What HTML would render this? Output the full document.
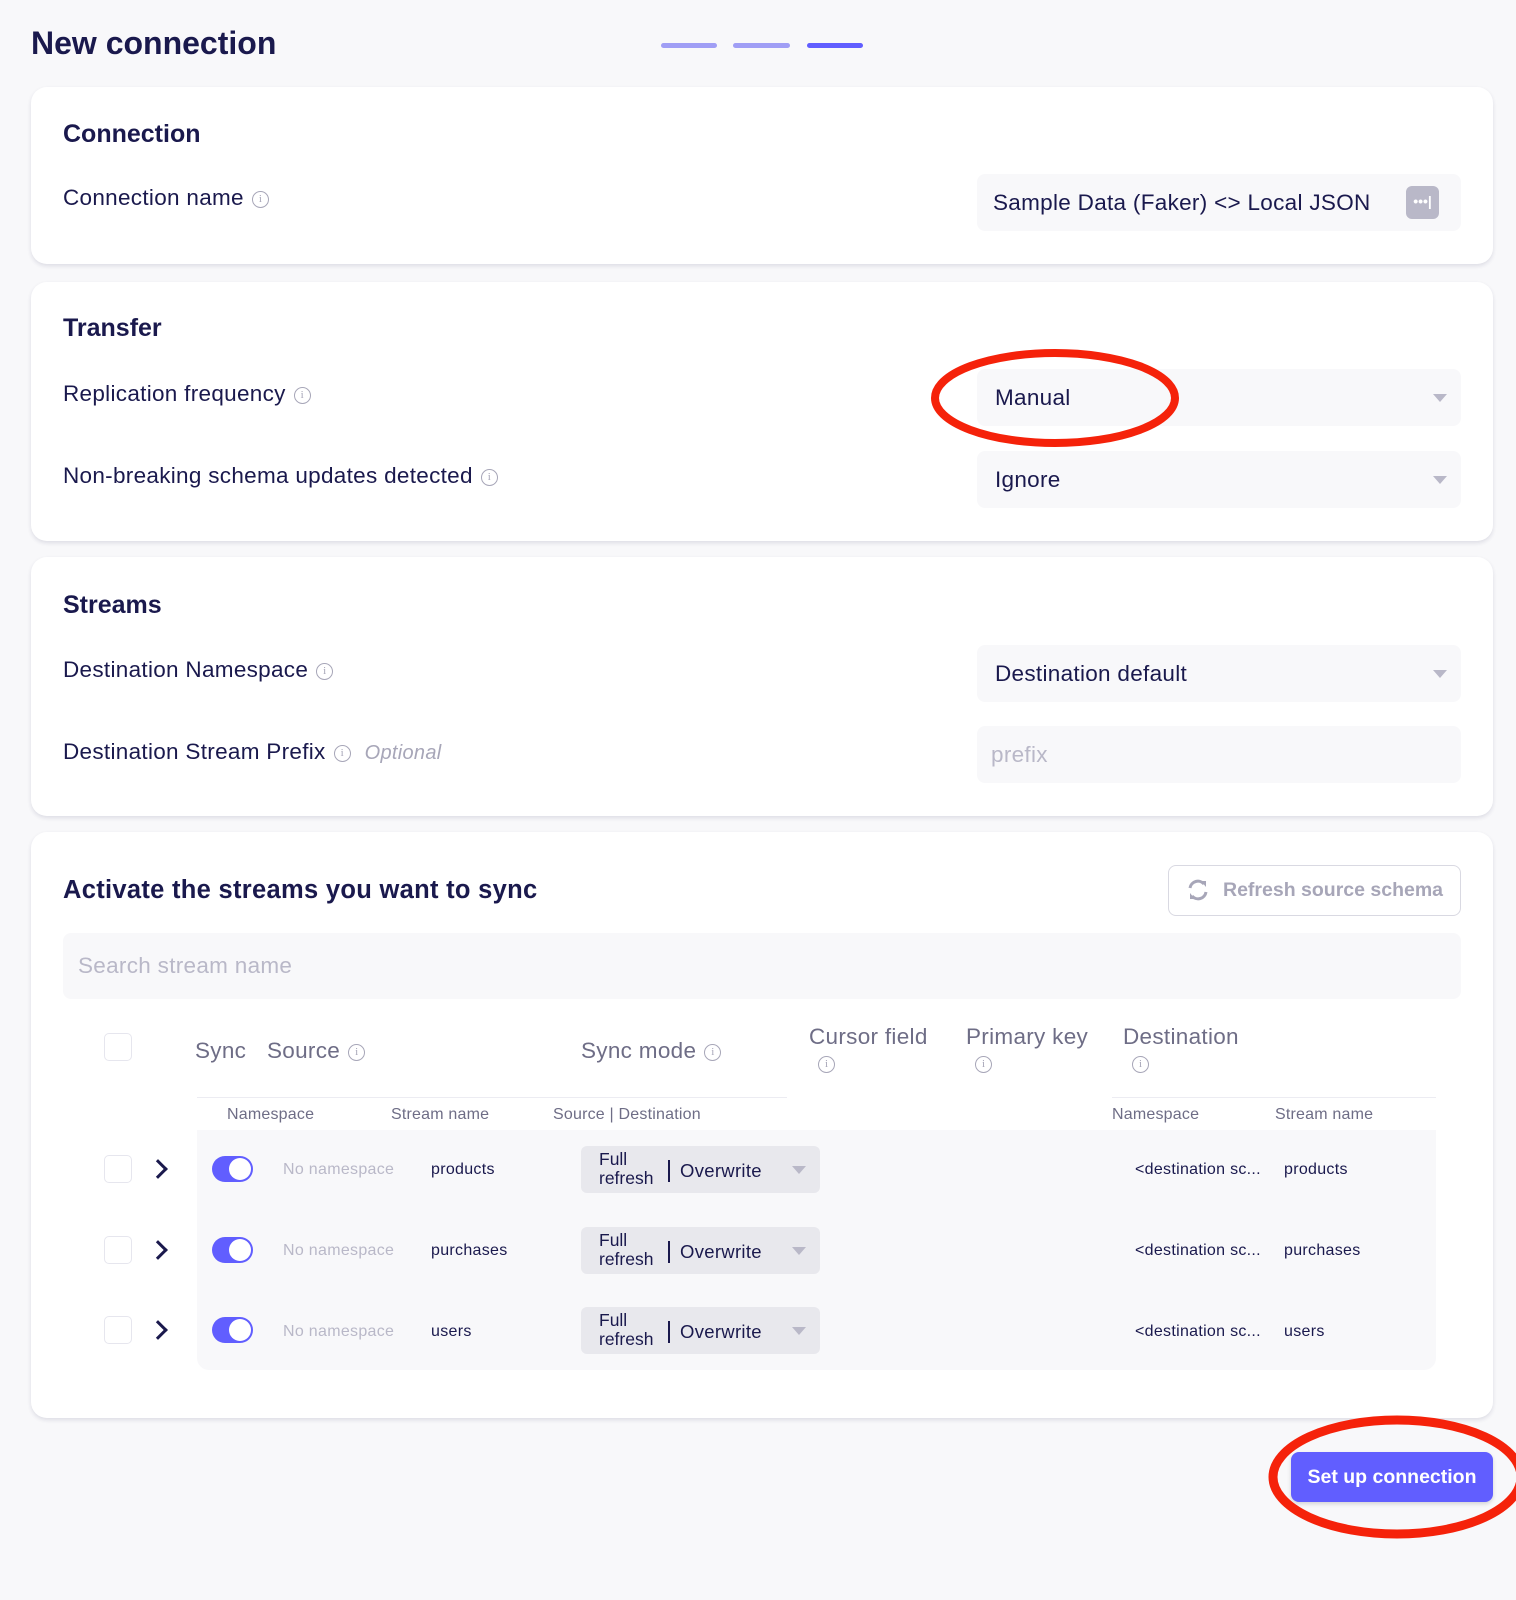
<!DOCTYPE html>
<html><head><meta charset="utf-8"><style>
*{box-sizing:border-box;margin:0;padding:0}
body{width:1516px;height:1600px;background:#f8f8fa;font-family:"Liberation Sans",Arial,sans-serif;color:#1a194d;position:relative;overflow:hidden}
.a{position:absolute}
.card{position:absolute;left:31px;width:1462px;background:#fff;border-radius:16px;box-shadow:0 2px 4px rgba(26,25,77,.12)}
h1{position:absolute;left:31px;top:25px;font-size:32px;font-weight:bold}
h2{position:absolute;left:32px;font-size:25px;font-weight:bold}
.lbl{position:absolute;left:32px;font-size:22.5px;white-space:nowrap;letter-spacing:.3px}
.inp{position:absolute;left:946px;width:484px;height:57px;background:#f8f8fa;border-radius:8px;font-size:22.5px;padding-left:18px;line-height:57px;letter-spacing:.3px}
.caret{position:absolute;right:14px;top:25px;width:0;height:0;border-left:7px solid transparent;border-right:7px solid transparent;border-top:8px solid #b9b8c8}
.i{display:inline-block;width:17px;height:17px;border:1.5px solid #a7a6b8;border-radius:50%;font-size:11px;line-height:14px;text-align:center;color:#a7a6b8;vertical-align:middle;margin-left:8px;font-family:"Liberation Serif",serif;letter-spacing:0}
.hd{position:absolute;font-size:22.5px;color:#6e6d86;white-space:nowrap;letter-spacing:.3px}
.sub{position:absolute;top:1106px;font-size:16px;color:#6e6d86;letter-spacing:.2px}
.cb{position:absolute;left:104px;width:28px;height:28px;border:1.5px solid #e6e6ee;border-radius:5px;background:#fff}
.chev{position:absolute;left:151px;width:14px;height:14px;border-right:3px solid #1a194d;border-top:3px solid #1a194d;transform:rotate(45deg)}
.tg{position:absolute;left:212px;width:41px;height:26px;border-radius:13px;background:#615eff}
.tg:after{content:"";position:absolute;right:2px;top:2px;width:22px;height:22px;border-radius:50%;background:#fff}
.t{position:absolute;font-size:16px;white-space:nowrap;letter-spacing:.3px}
.dd{position:absolute;left:581px;width:239px;height:47px;background:#e8e8ed;border-radius:6px}
.dd .f{position:absolute;left:18px;top:4px;font-size:17.5px;line-height:19px}
.dd .s{position:absolute;left:87px;top:14px;width:1.5px;height:22px;background:#1a194d}
.dd .o{position:absolute;left:99px;top:14px;font-size:18.5px;letter-spacing:.3px}
.dd .caret{top:20px;right:14px}
</style></head><body>
<h1>New connection</h1>
<div class="a" style="left:661px;top:43px;width:56px;height:5px;border-radius:3px;background:#a09ef5"></div>
<div class="a" style="left:733px;top:43px;width:57px;height:5px;border-radius:3px;background:#a09ef5"></div>
<div class="a" style="left:807px;top:43px;width:56px;height:5px;border-radius:3px;background:#615eff"></div>

<div class="card" style="top:87px;height:177px">
<h2 style="top:33px">Connection</h2>
<div class="lbl" style="top:98px">Connection name<span class="i">i</span></div>
<div class="inp" style="top:87px;padding-left:16px">Sample Data (Faker) &lt;&gt; Local JSON
<div class="a" style="right:22px;top:12px;width:33px;height:33px;background:#b9b8c8;border-radius:6px;color:#fff;font-size:14px;line-height:30px;text-align:center;font-weight:bold;letter-spacing:0">•••|</div></div>
</div>

<div class="card" style="top:282px;height:259px">
<h2 style="top:32px">Transfer</h2>
<div class="lbl" style="top:99px">Replication frequency<span class="i">i</span></div>
<div class="inp" style="top:87px">Manual<div class="caret"></div></div>
<div class="lbl" style="top:181px">Non-breaking schema updates detected<span class="i">i</span></div>
<div class="inp" style="top:169px">Ignore<div class="caret"></div></div>
</div>

<div class="card" style="top:557px;height:259px">
<h2 style="top:34px">Streams</h2>
<div class="lbl" style="top:100px">Destination Namespace<span class="i">i</span></div>
<div class="inp" style="top:88px">Destination default<div class="caret"></div></div>
<div class="lbl" style="top:182px">Destination Stream Prefix<span class="i">i</span><span style="color:#a7a6b8;font-style:italic;font-size:20px;margin-left:14px">Optional</span></div>
<div class="inp" style="top:169px;color:#b9b8c8;padding-left:14px">prefix</div>
</div>

<div class="card" style="top:832px;height:586px"></div>
<h2 style="top:876px;left:63px;font-size:25.5px;letter-spacing:.3px">Activate the streams you want to sync</h2>
<div class="a" style="left:1168px;top:865px;width:293px;height:51px;border:1.5px solid #d9d9e2;border-radius:8px;color:#a7a6b8;font-size:19.5px;font-weight:bold;line-height:48px;padding-left:54px;white-space:nowrap">Refresh source schema
<svg class="a" style="left:17px;top:13px" width="24" height="22" viewBox="0 0 24 22"><path d="M4 9a8 8 0 0 1 14-4M20 13a8 8 0 0 1-14 4" fill="none" stroke="#a7a6b8" stroke-width="3"/><path d="M15 2l5 0 0 6z M9 20l-5 0 0-6z" fill="#a7a6b8"/></svg></div>
<div class="a" style="left:63px;top:933px;width:1398px;height:66px;background:#f8f8fa;border-radius:8px;font-size:22.5px;color:#b9b8c8;line-height:66px;padding-left:15px;letter-spacing:.3px">Search stream name</div>

<div class="cb" style="top:1033px"></div>
<div class="hd" style="left:195px;top:1038px">Sync</div>
<div class="hd" style="left:267px;top:1038px">Source<span class="i">i</span></div>
<div class="hd" style="left:581px;top:1038px">Sync mode<span class="i">i</span></div>
<div class="hd" style="left:809px;top:1024px">Cursor field<br><span class="i" style="margin-left:9px">i</span></div>
<div class="hd" style="left:966px;top:1024px">Primary key<br><span class="i" style="margin-left:9px">i</span></div>
<div class="hd" style="left:1123px;top:1024px">Destination<br><span class="i" style="margin-left:9px">i</span></div>
<div class="a" style="left:197px;top:1097px;width:590px;height:1px;background:#ececf2"></div>
<div class="a" style="left:1112px;top:1097px;width:324px;height:1px;background:#ececf2"></div>
<div class="sub" style="left:227px">Namespace</div>
<div class="sub" style="left:391px">Stream name</div>
<div class="sub" style="left:553px">Source | Destination</div>
<div class="sub" style="left:1112px">Namespace</div>
<div class="sub" style="left:1275px">Stream name</div>
<div class="a" style="left:197px;top:1130px;width:1239px;height:240px;background:#f8f8fa;border-radius:0 0 12px 12px"></div>

<div class="cb" style="top:1155px"></div><div class="chev" style="top:1162px"></div><div class="tg" style="top:1156px"></div>
<div class="t" style="left:283px;top:1161px;color:#b9b8c8">No namespace</div><div class="t" style="left:431px;top:1161px">products</div>
<div class="dd" style="top:1146px"><div class="f">Full<br>refresh</div><div class="s"></div><div class="o">Overwrite</div><div class="caret"></div></div>
<div class="t" style="left:1135px;top:1161px">&lt;destination sc...</div><div class="t" style="left:1284px;top:1161px">products</div>

<div class="cb" style="top:1236px"></div><div class="chev" style="top:1243px"></div><div class="tg" style="top:1237px"></div>
<div class="t" style="left:283px;top:1242px;color:#b9b8c8">No namespace</div><div class="t" style="left:431px;top:1242px">purchases</div>
<div class="dd" style="top:1227px"><div class="f">Full<br>refresh</div><div class="s"></div><div class="o">Overwrite</div><div class="caret"></div></div>
<div class="t" style="left:1135px;top:1242px">&lt;destination sc...</div><div class="t" style="left:1284px;top:1242px">purchases</div>

<div class="cb" style="top:1316px"></div><div class="chev" style="top:1323px"></div><div class="tg" style="top:1317px"></div>
<div class="t" style="left:283px;top:1323px;color:#b9b8c8">No namespace</div><div class="t" style="left:431px;top:1323px">users</div>
<div class="dd" style="top:1307px"><div class="f">Full<br>refresh</div><div class="s"></div><div class="o">Overwrite</div><div class="caret"></div></div>
<div class="t" style="left:1135px;top:1323px">&lt;destination sc...</div><div class="t" style="left:1284px;top:1323px">users</div>

<div class="a" style="left:1291px;top:1452px;width:202px;height:50px;background:#615eff;border-radius:8px;color:#fff;font-size:19.5px;font-weight:bold;line-height:50px;text-align:center;box-shadow:0 2px 4px rgba(0,0,0,.15)">Set up connection</div>

<svg class="a" style="left:0;top:0" width="1516" height="1600"><ellipse cx="1055" cy="398" rx="120" ry="45" fill="none" stroke="#f5220a" stroke-width="8"/><ellipse cx="1397" cy="1477" rx="124" ry="57" fill="none" stroke="#f5220a" stroke-width="9"/></svg>
</body></html>
